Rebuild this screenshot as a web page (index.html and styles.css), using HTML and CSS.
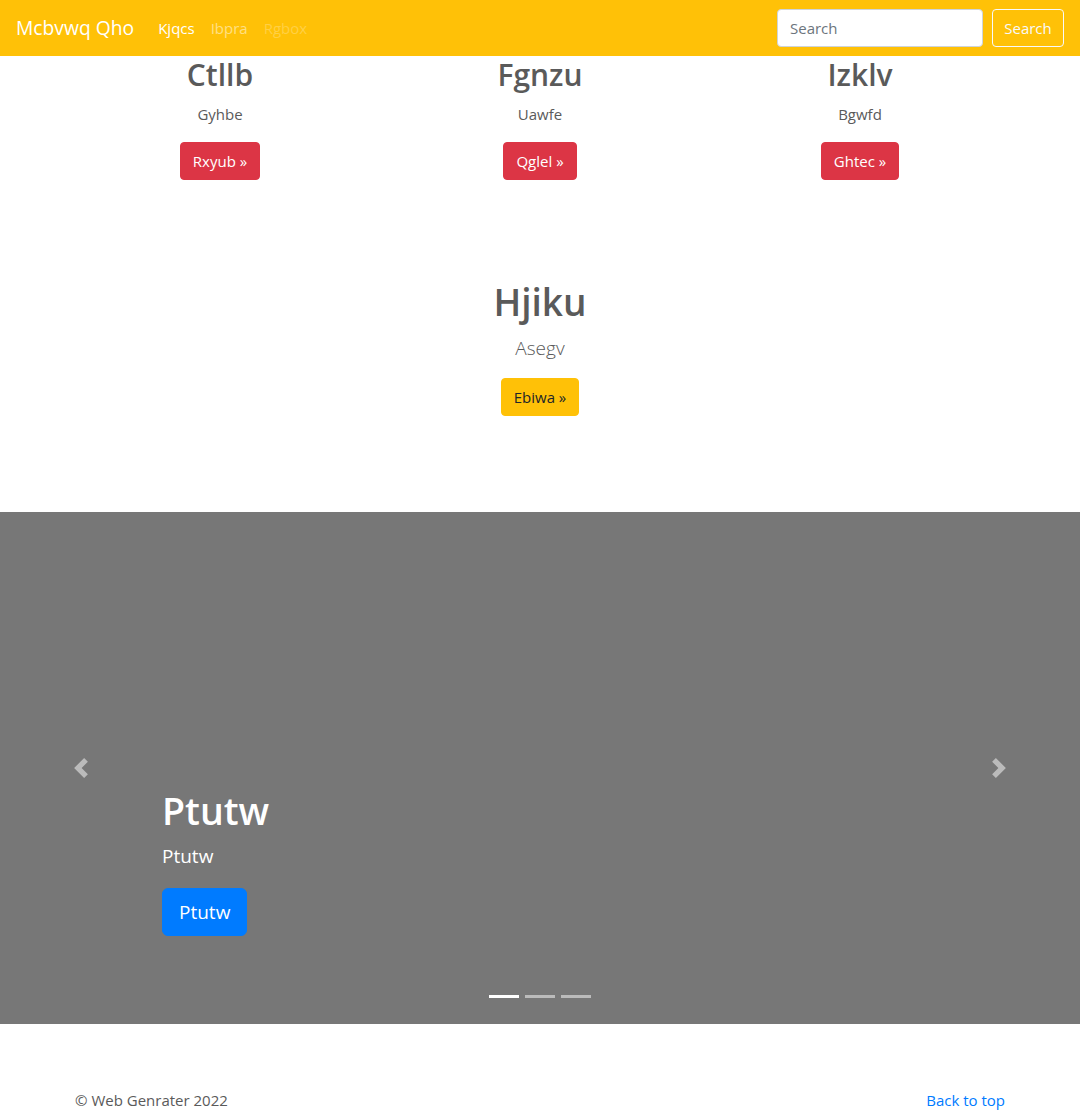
FILE: index.html
```html
<!DOCTYPE html>
<html lang="en">
<head>
<meta charset="utf-8">
<title>Mcbvwq Qho</title>
<link rel="stylesheet" href="styles.css">
</head>
<body>
<header class="navbar">
  <a class="brand" href="#">Mcbvwq Qho</a>
  <nav class="nav">
    <a class="nav-link active" href="#">Kjqcs</a>
    <a class="nav-link" href="#">Ibpra</a>
    <a class="nav-link disabled" href="#">Rgbox</a>
  </nav>
  <form class="search">
    <input class="search-input" type="text" placeholder="Search">
    <button class="btn btn-outline-light" type="button">Search</button>
  </form>
</header>

<main>
  <section class="marketing">
    <div class="col">
      <h2 class="col-title">Ctllb</h2>
      <p class="col-text">Gyhbe</p>
      <p><a class="btn btn-danger" href="#">Rxyub »</a></p>
    </div>
    <div class="col">
      <h2 class="col-title">Fgnzu</h2>
      <p class="col-text">Uawfe</p>
      <p><a class="btn btn-danger" href="#">Qglel »</a></p>
    </div>
    <div class="col">
      <h2 class="col-title">Izklv</h2>
      <p class="col-text">Bgwfd</p>
      <p><a class="btn btn-danger" href="#">Ghtec »</a></p>
    </div>
  </section>

  <section class="feature">
    <h1 class="feature-title">Hjiku</h1>
    <p class="lead">Asegv</p>
    <p><a class="btn btn-warning" href="#">Ebiwa »</a></p>
  </section>

  <section class="carousel">
    <a class="control control-prev" href="#" aria-label="Previous">
      <svg width="20" height="20" viewBox="0 0 8 8"><path d="M5.25 0l-4 4 4 4 1.5-1.5L4.25 4l2.5-2.5L5.25 0z" fill="#fff"/></svg>
    </a>
    <div class="caption">
      <h1 class="caption-title">Ptutw</h1>
      <p class="caption-text">Ptutw</p>
      <p class="caption-action"><a class="btn btn-primary btn-lg" href="#">Ptutw</a></p>
    </div>
    <a class="control control-next" href="#" aria-label="Next">
      <svg width="20" height="20" viewBox="0 0 8 8"><path d="M2.75 0l-1.5 1.5L3.75 4l-2.5 2.5L2.75 8l4-4-4-4z" fill="#fff"/></svg>
    </a>
    <ol class="indicators">
      <li class="active"></li>
      <li></li>
      <li></li>
    </ol>
  </section>
</main>

<footer class="footer">
  <p class="copy">© Web Genrater 2022</p>
  <a class="top-link" href="#">Back to top</a>
</footer>
</body>
</html>
```

FILE: styles.css
```css
* { box-sizing: border-box; }

html, body {
  margin: 0;
  padding: 0;
}

body {
  font-family: "Open Sans", "Noto Sans", sans-serif;
  font-size: 15px;
  line-height: 1.5;
  color: #5a5a5a;
  background: #fff;
}

a { text-decoration: none; }
p { margin: 0; }
h1, h2 { margin: 0; }

/* navbar */
.navbar {
  height: 56px;
  background: #ffc107;
  display: flex;
  align-items: center;
  padding: 8px 16px;
}
.brand {
  color: #fff;
  font-size: 19.3px;
  line-height: 30px;
  margin-right: 16px;
}
.nav {
  display: flex;
  flex: 1;
}
.nav-link {
  color: rgba(255,255,255,.5);
  padding: 8px;
  font-size: 15px;
  line-height: 24px;
}
.nav-link.active { color: #fff; }
.nav-link.disabled { color: rgba(255,255,255,.25); }

.search {
  display: flex;
  align-items: center;
}
.search-input {
  width: 206px;
  height: 38px;
  padding: 6px 12px;
  border: 1px solid #ced4da;
  border-radius: 4px;
  font-family: inherit;
  font-size: 15px;
  color: #495057;
  margin-right: 9px;
}
.search-input::placeholder { color: #6c757d; }

.btn {
  display: inline-block;
  height: 38px;
  padding: 6px 12px;
  border: 1px solid transparent;
  border-radius: 4px;
  font-family: inherit;
  font-size: 15px;
  line-height: 24px;
  color: #fff;
  background: transparent;
}
.btn-outline-light {
  border-color: #f8f9fa;
  color: #f8f9fa;
  width: 72px;
  padding: 6px 0;
  text-align: center;
}
.btn-danger { background: #dc3545; border-color: #dc3545; }
.btn-warning { background: #ffc107; border-color: #ffc107; color: #212529; }
.btn-primary { background: #007bff; border-color: #007bff; }
.btn-lg {
  height: 48px;
  padding: 8px 16px;
  font-size: 19px;
  line-height: 30px;
  border-radius: 6px;
}

/* marketing */
.marketing {
  width: 960px;
  margin: 0 auto;
  display: grid;
  grid-template-columns: repeat(3, 1fr);
  text-align: center;
}
.col { padding: 0 15px; }
.col-title {
  font-size: 30px;
  font-weight: 600;
  line-height: 38px;
  margin-bottom: 9px;
}
.col-text { margin-bottom: 16px; }

/* feature */
.feature {
  text-align: center;
  padding: 98px 0 96px;
}
.feature-title {
  font-size: 37px;
  font-weight: 600;
  line-height: 48px;
  margin-bottom: 7px;
}
.lead {
  font-size: 19px;
  font-weight: 300;
  line-height: 30px;
  margin-bottom: 15px;
}

/* carousel */
.carousel {
  position: relative;
  height: 512px;
  background: #777;
}
.control {
  position: absolute;
  top: 0;
  bottom: 0;
  width: 162px;
  display: flex;
  align-items: center;
  justify-content: center;
  opacity: .5;
}
.control-prev { left: 0; }
.control-next { right: 0; }

.caption {
  position: absolute;
  left: 162px;
  right: 162px;
  bottom: 48px;
  padding: 20px 0;
  color: #fff;
}
.caption-title {
  font-size: 37.5px;
  font-weight: 600;
  line-height: 48px;
  margin-bottom: 6px;
}
.caption-text {
  font-size: 19px;
  line-height: 30px;
  margin-bottom: 17px;
}
.caption-action { margin-bottom: 20px; }

.indicators {
  position: absolute;
  left: 0;
  right: 0;
  bottom: 26px;
  margin: 0;
  padding: 0;
  list-style: none;
  display: flex;
  justify-content: center;
  gap: 6px;
}
.indicators li {
  width: 30px;
  height: 3px;
  background: #fff;
  opacity: .5;
}
.indicators li.active { opacity: 1; }

/* footer */
.footer {
  width: 960px;
  margin: 0 auto;
  padding: 64px 15px 0;
  display: flex;
  justify-content: space-between;
  line-height: 24px;
}
.top-link { color: #007bff; }
```
